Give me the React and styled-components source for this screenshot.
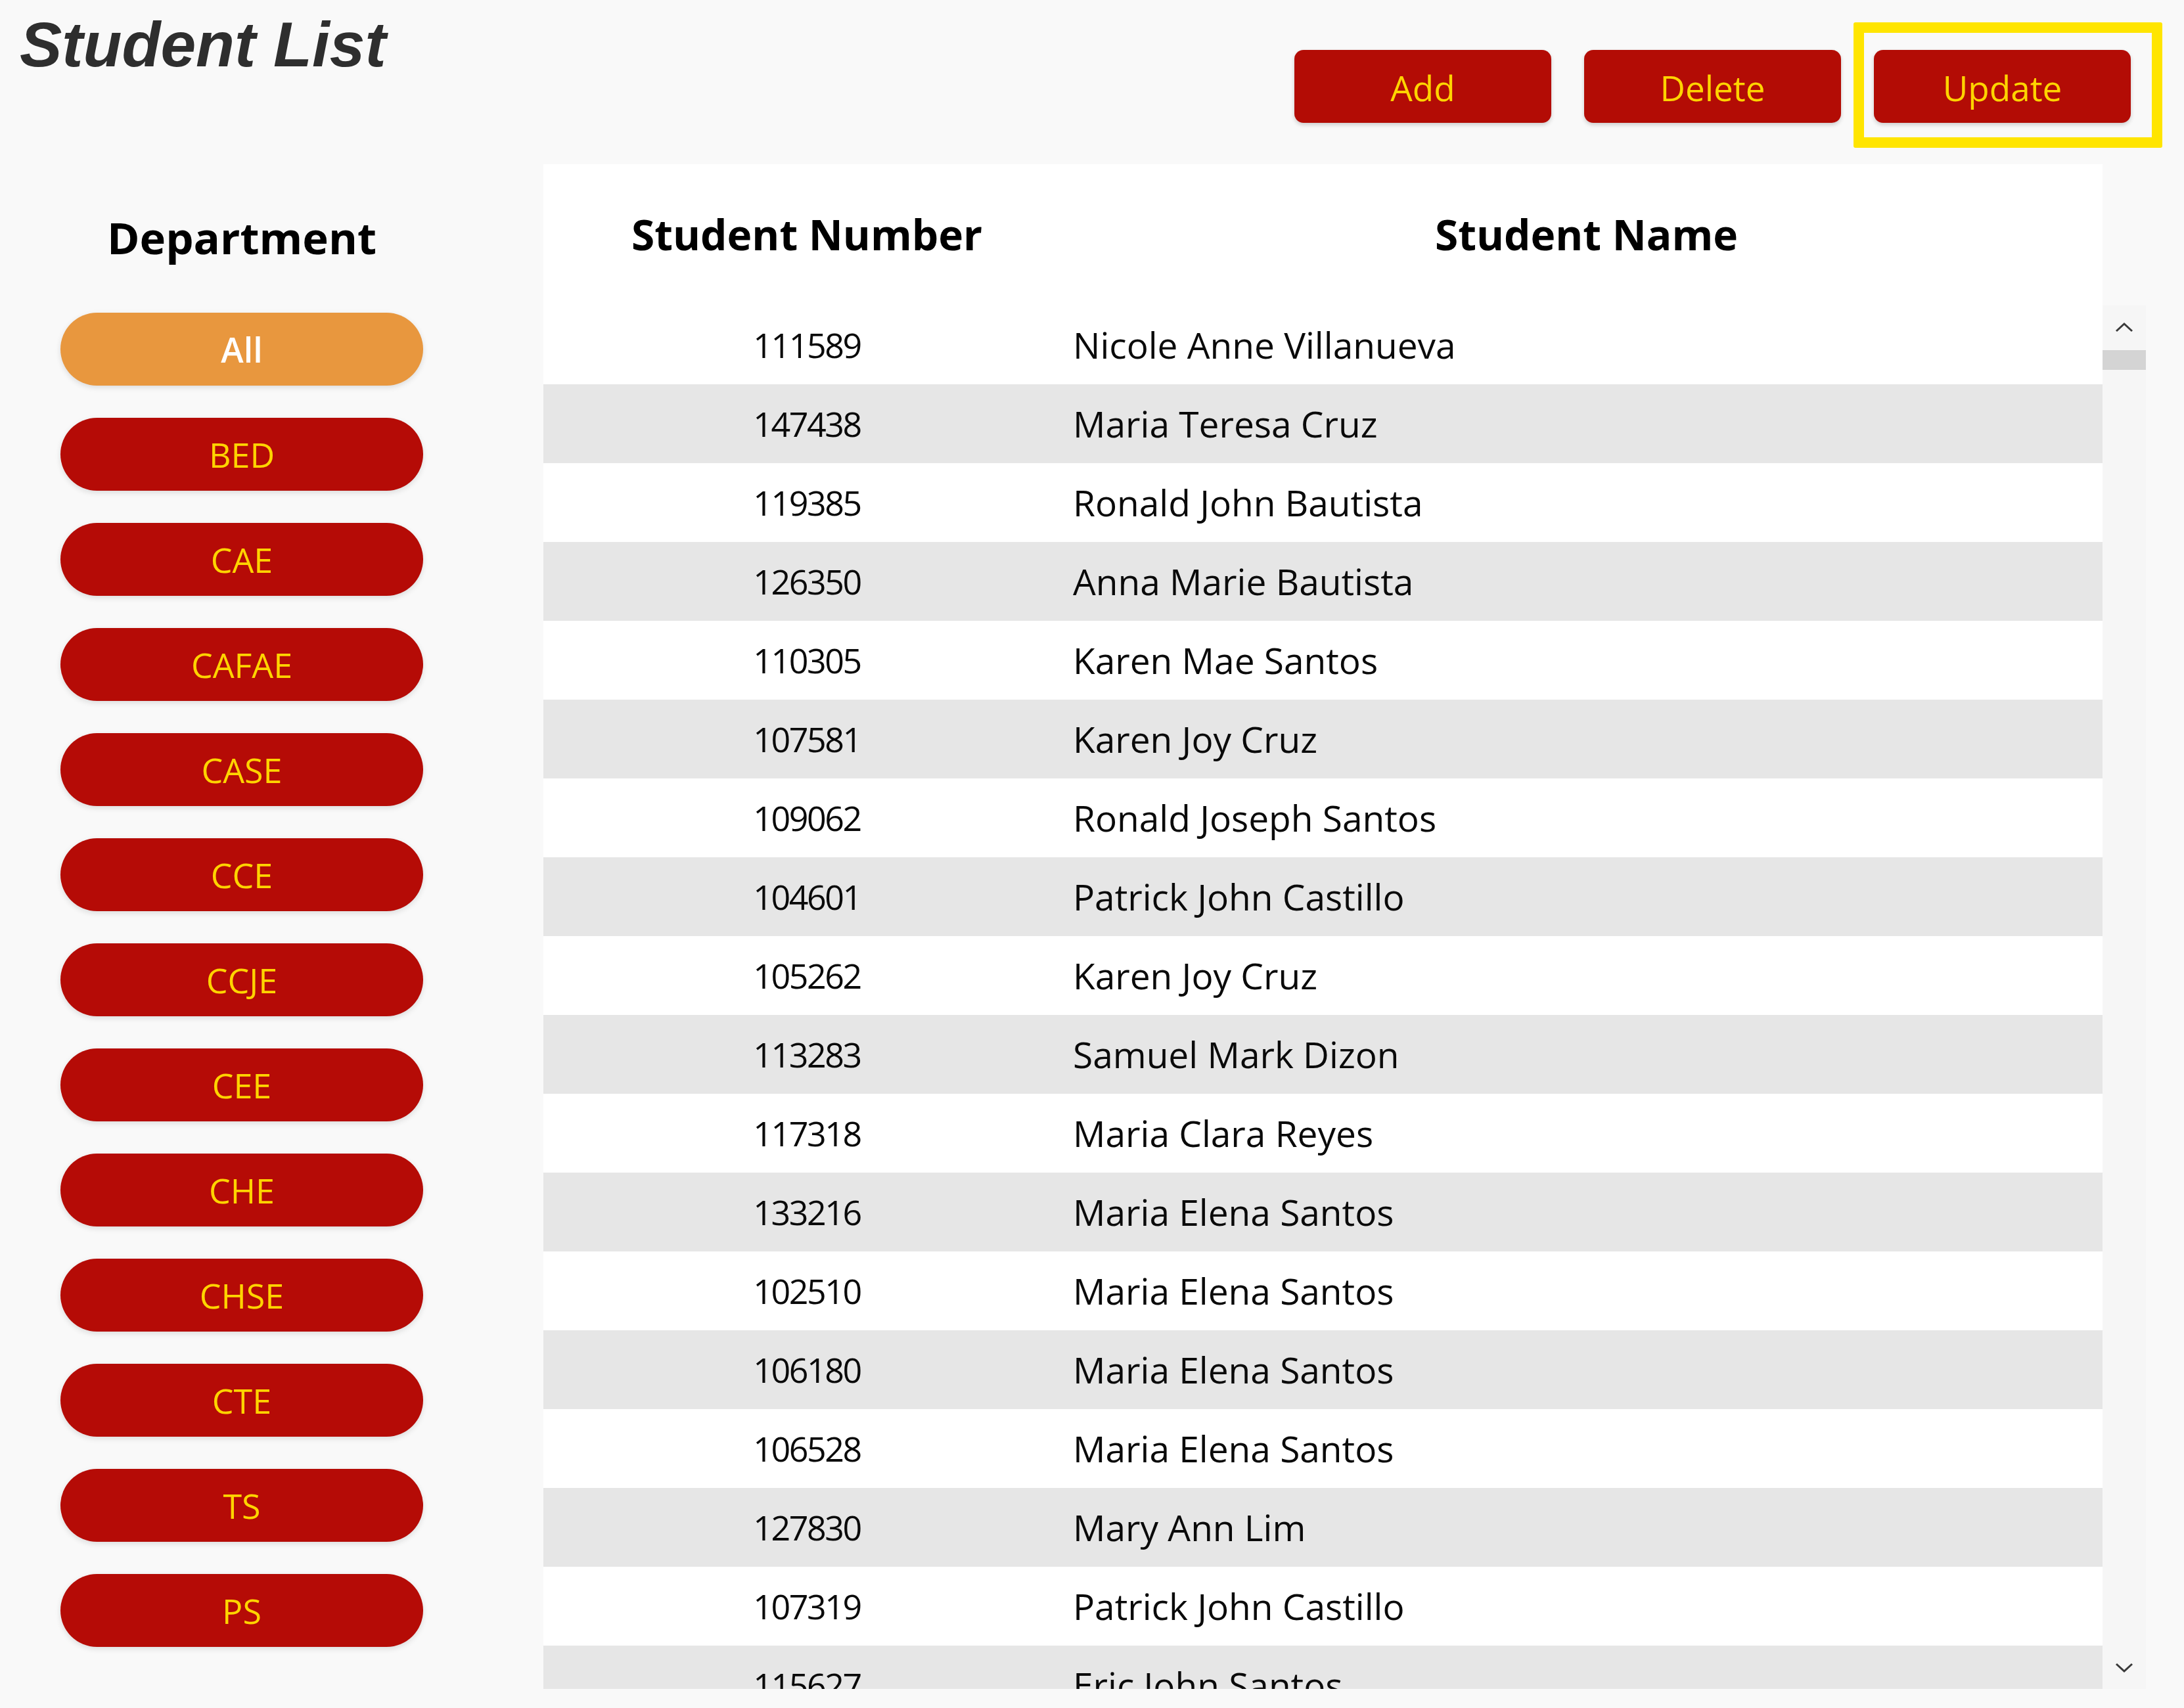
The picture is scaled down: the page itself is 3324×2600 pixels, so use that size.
import React from 'react'
import styled, { createGlobalStyle } from 'styled-components'

const GlobalStyle = createGlobalStyle`
  html, body {
    margin: 0;
    padding: 0;
    background: #f9f9f9;
  }
  * {
    box-sizing: border-box;
  }
`

const departments = ['All', 'BED', 'CAE', 'CAFAE', 'CASE', 'CCE', 'CCJE', 'CEE', 'CHE', 'CHSE', 'CTE', 'TS', 'PS']

const students = [
  ['111589', 'Nicole Anne Villanueva'],
  ['147438', 'Maria Teresa Cruz'],
  ['119385', 'Ronald John Bautista'],
  ['126350', 'Anna Marie Bautista'],
  ['110305', 'Karen Mae Santos'],
  ['107581', 'Karen Joy Cruz'],
  ['109062', 'Ronald Joseph Santos'],
  ['104601', 'Patrick John Castillo'],
  ['105262', 'Karen Joy Cruz'],
  ['113283', 'Samuel Mark Dizon'],
  ['117318', 'Maria Clara Reyes'],
  ['133216', 'Maria Elena Santos'],
  ['102510', 'Maria Elena Santos'],
  ['106180', 'Maria Elena Santos'],
  ['106528', 'Maria Elena Santos'],
  ['127830', 'Mary Ann Lim'],
  ['107319', 'Patrick John Castillo'],
  ['115627', 'Eric John Santos'],
]

export default function App() {
  return (
    <>
      <GlobalStyle />
      <Page>
        <TopBar>
          <Title>Student List</Title>
          <Actions>
            <ActionButton>Add</ActionButton>
            <ActionButton>Delete</ActionButton>
            <Highlighted>
              <ActionButton>Update</ActionButton>
              <HighlightBox />
            </Highlighted>
          </Actions>
        </TopBar>

        <Content>
          <Sidebar>
            <SideHeading>Department</SideHeading>
            <PillList>
              {departments.map((d, i) => (
                <Pill key={d} active={i === 0}>{d}</Pill>
              ))}
            </PillList>
          </Sidebar>

          <TableGrid>
            <HeadRow>
              <HeadCell>Student Number</HeadCell>
              <HeadCell>Student Name</HeadCell>
            </HeadRow>
            <HeadGutter />
            <Body>
              {students.map(([num, name], i) => (
                <Row key={num} striped={i % 2 === 1}>
                  <NumCell>{num}</NumCell>
                  <NameCell>{name}</NameCell>
                </Row>
              ))}
            </Body>
            <ScrollTrack>
              <Chevron viewBox="0 0 28 16">
                <path d="M2 14 L14 3 L26 14" />
              </Chevron>
              <Thumb />
              <Spacer />
              <Chevron viewBox="0 0 28 16">
                <path d="M2 2 L14 13 L26 2" />
              </Chevron>
            </ScrollTrack>
          </TableGrid>
        </Content>
      </Page>
    </>
  )
}

const Page = styled.div`
  width: 3324px;
  height: 2600px;
  overflow: hidden;
  background: #f9f9f9;
  font-family: "Open Sans", "Noto Sans", sans-serif;
`

const TopBar = styled.div`
  height: 250px;
  display: flex;
  justify-content: space-between;
  align-items: flex-start;
  padding: 0 81px 0 30px;
`

const Title = styled.h1`
  margin: 13px 0 0;
  font-family: "Liberation Sans", Arial, sans-serif;
  font-style: italic;
  font-weight: 700;
  font-size: 96.5px;
  line-height: 1.149;
  color: #2e2e2e;
`

const Actions = styled.div`
  display: flex;
  gap: 50px;
  padding-top: 76px;
`

const ActionButton = styled.button`
  width: 391px;
  height: 111px;
  border: 0;
  border-radius: 14px;
  background: #b30c05;
  color: #ffd400;
  font-family: "Open Sans", "Noto Sans", sans-serif;
  font-size: 53px;
  padding-top: 4px;
  box-shadow: 0 3px 6px rgba(0, 0, 0, 0.18);
  cursor: pointer;
`

const Highlighted = styled.div`
  position: relative;
`

const HighlightBox = styled.div`
  position: absolute;
  top: -42px;
  left: -31px;
  right: -48px;
  bottom: -38px;
  border: 16px solid #ffe500;
  border-radius: 3px;
  pointer-events: none;
`

const Content = styled.div`
  display: flex;
  align-items: flex-start;
`

const Sidebar = styled.div`
  width: 827px;
  padding-left: 92px;
  display: flex;
  flex-direction: column;
`

const SideHeading = styled.h2`
  width: 552px;
  margin: 66px 0 0;
  text-align: center;
  font-weight: 700;
  font-size: 67px;
  line-height: 90px;
  color: #000;
`

const PillList = styled.div`
  width: 552px;
  margin-top: 70px;
  display: flex;
  flex-direction: column;
  gap: 49px;
`

const Pill = styled.button`
  height: 111px;
  border: 0;
  border-radius: 56px;
  background: ${({ active }) => (active ? '#e8973e' : '#b50b06')};
  color: ${({ active }) => (active ? '#ffffff' : '#ffd400')};
  font-family: "Open Sans", "Noto Sans", sans-serif;
  font-weight: ${({ active }) => (active ? 600 : 400)};
  font-size: 52px;
  box-shadow: 0 3px 8px rgba(0, 0, 0, 0.12);
  cursor: pointer;
`

const TableGrid = styled.div`
  display: grid;
  grid-template-columns: 2373px 66px;
  grid-template-rows: 215px 2106px;
`

const HeadRow = styled.div`
  background: #fff;
  display: grid;
  grid-template-columns: 802px 1fr;
  padding-top: 63px;
`

const HeadGutter = styled.div`
  background: #f9f9f9;
`

const HeadCell = styled.div`
  text-align: center;
  font-weight: 700;
  font-size: 64px;
  line-height: 88px;
  color: #000;
`

const Body = styled.div`
  background: #fff;
  overflow: hidden;
`

const Row = styled.div`
  height: 120px;
  display: grid;
  grid-template-columns: 802px 1fr;
  align-items: center;
  background: ${({ striped }) => (striped ? '#e6e6e6' : '#ffffff')};
  color: #0a0a0a;
`

const NumCell = styled.div`
  text-align: center;
  font-size: 52px;
  letter-spacing: -2.5px;
  padding-bottom: 2px;
`

const NameCell = styled.div`
  padding-left: 4px;
  padding-bottom: 2px;
  font-size: 55px;
`

const ScrollTrack = styled.div`
  background: #f6f6f6;
  display: flex;
  flex-direction: column;
  align-items: center;
  padding: 25px 0 24px;
`

const Chevron = styled.svg`
  width: 28px;
  height: 16px;
  fill: none;
  stroke: #3a3a3a;
  stroke-width: 3;
  stroke-linejoin: miter;
`

const Thumb = styled.div`
  width: 66px;
  height: 30px;
  margin-top: 27px;
  background: #d4d4d4;
`

const Spacer = styled.div`
  flex: 1;
`
